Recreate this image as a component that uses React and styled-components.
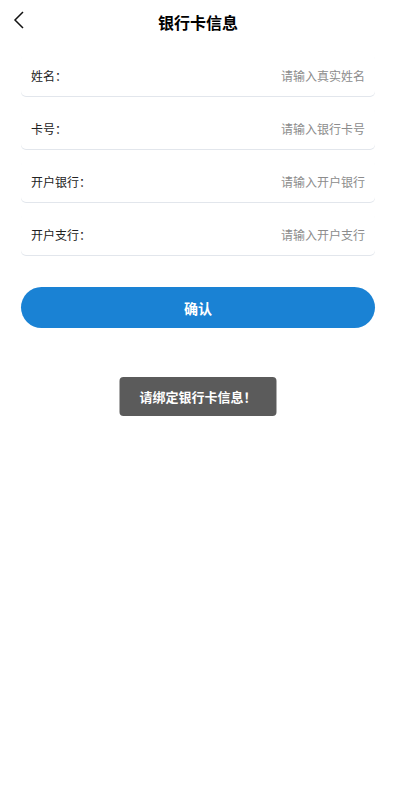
import React from "react";
import styled, { createGlobalStyle } from "styled-components";

const GlobalStyle = createGlobalStyle`
  * { box-sizing: border-box; }
  body {
    margin: 0;
    background: #fff;
    font-family: "Noto Sans CJK SC", "Noto Sans", sans-serif;
  }
`;

const fields = [
  { label: "姓名：", placeholder: "请输入真实姓名" },
  { label: "卡号：", placeholder: "请输入银行卡号" },
  { label: "开户银行：", placeholder: "请输入开户银行" },
  { label: "开户支行：", placeholder: "请输入开户支行" },
];

const App = () => {
  return (
    <Page>
      <GlobalStyle />
      <Header>
        <BackButton>
          <svg width="12" height="18" viewBox="0 0 12 18" fill="none">
            <path d="M10 1L2 9l8 8" stroke="#111" strokeWidth="1.5" />
          </svg>
        </BackButton>
        <Title>银行卡信息</Title>
      </Header>
      <Form>
        {fields.map((f) => (
          <Row key={f.label}>
            <Label>{f.label}</Label>
            <Input placeholder={f.placeholder} />
          </Row>
        ))}
      </Form>
      <ConfirmButton>确认</ConfirmButton>
      <Toast>请绑定银行卡信息！</Toast>
    </Page>
  );
};

export default App;

const Page = styled.div`
  position: relative;
  width: 396px;
  min-height: 794px;
  background: #fff;
`;

const Header = styled.div`
  position: relative;
  height: 44px;
  display: flex;
  align-items: center;
  justify-content: center;
`;

const BackButton = styled.div`
  position: absolute;
  left: 13px;
  top: 11px;
  display: flex;
`;

const Title = styled.h1`
  margin: 0;
  font-size: 16px;
  font-weight: 700;
  color: #000;
`;

const Form = styled.div`
  display: flex;
  flex-direction: column;
  gap: 11px;
  padding: 10px 21px 0;
`;

const Row = styled.div`
  height: 42px;
  display: flex;
  align-items: center;
  padding: 0 10px;
  border-radius: 5px;
  background: #fff;
  box-shadow: 0 1px 0 #e2e6ec;
`;

const Label = styled.span`
  font-size: 12px;
  color: #222;
  white-space: nowrap;
`;

const Input = styled.input`
  flex: 1;
  min-width: 0;
  border: none;
  outline: none;
  background: transparent;
  text-align: right;
  font-size: 12px;
  font-family: inherit;
  color: #333;
  padding: 0;
  &::placeholder {
    color: #8c8c8c;
  }
`;

const ConfirmButton = styled.button`
  display: block;
  width: 354px;
  height: 41px;
  margin: 32px 21px 0;
  border: none;
  border-radius: 21px;
  background: #1a82d4;
  color: #fff;
  font-family: inherit;
  font-size: 14px;
  font-weight: 700;
`;

const Toast = styled.div`
  position: absolute;
  top: 377px;
  left: 50%;
  transform: translateX(-50%);
  height: 39px;
  padding: 0 20px;
  display: flex;
  align-items: center;
  border-radius: 4px;
  background: #5b5b5b;
  color: #fff;
  font-size: 13px;
  font-weight: 700;
  white-space: nowrap;
`;
